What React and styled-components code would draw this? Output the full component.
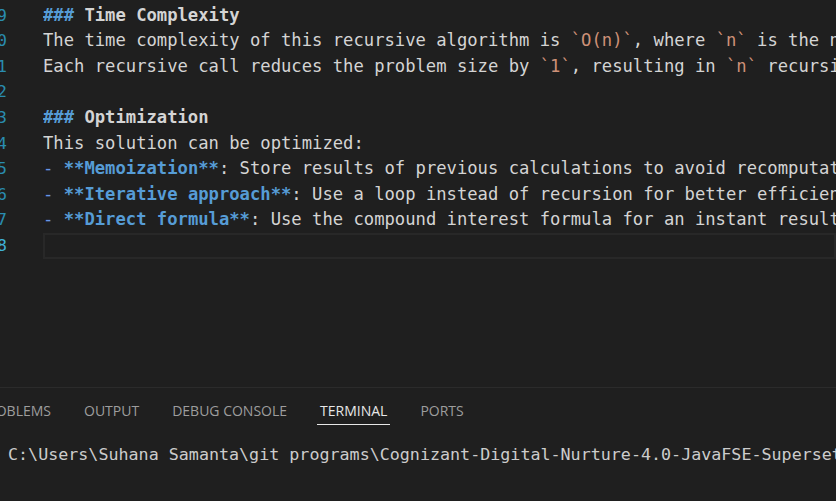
import React from 'react'
import styled, { createGlobalStyle } from 'styled-components'

const GlobalStyle = createGlobalStyle`
  html, body {
    margin: 0;
    padding: 0;
    background: #1f1f1f;
    overflow: hidden;
  }
`

const lines = [
  { n: 39, parts: [{ t: '### Time Complexity', k: 'heading' }] },
  {
    n: 40,
    parts: [
      { t: 'The time complexity of this recursive algorithm is ' },
      { t: '`O(n)`', k: 'code' },
      { t: ', where ' },
      { t: '`n`', k: 'code' },
      { t: ' is the number of years.' },
    ],
  },
  {
    n: 41,
    parts: [
      { t: 'Each recursive call reduces the problem size by ' },
      { t: '`1`', k: 'code' },
      { t: ', resulting in ' },
      { t: '`n`', k: 'code' },
      { t: ' recursive calls.' },
    ],
  },
  { n: 42, parts: [] },
  { n: 43, parts: [{ t: '### Optimization', k: 'heading' }] },
  { n: 44, parts: [{ t: 'This solution can be optimized:' }] },
  {
    n: 45,
    parts: [
      { t: '- ', k: 'dash' },
      { t: '**Memoization**', k: 'strong' },
      { t: ': Store results of previous calculations to avoid recomputation.' },
    ],
  },
  {
    n: 46,
    parts: [
      { t: '- ', k: 'dash' },
      { t: '**Iterative approach**', k: 'strong' },
      { t: ': Use a loop instead of recursion for better efficiency.' },
    ],
  },
  {
    n: 47,
    parts: [
      { t: '- ', k: 'dash' },
      { t: '**Direct formula**', k: 'strong' },
      { t: ': Use the compound interest formula for an instant result.' },
    ],
  },
  { n: 48, parts: [], active: true },
]

const tabs = ['OUTPUT', 'DEBUG CONSOLE', 'TERMINAL', 'PORTS']

const Heading = ({ text }) => {
  const [hash, ...rest] = text.split(' ')
  return (
    <>
      <Token $kind="hash">{hash}</Token>
      <Token $kind="headText">{' ' + rest.join(' ')}</Token>
    </>
  )
}

const App = () => {
  return (
    <>
      <GlobalStyle />
      <Window>
        <Editor>
          {lines.map((line) => (
            <Row key={line.n}>
              <LineNumber $active={line.active}>{line.n}</LineNumber>
              <Code $active={line.active}>
                {line.parts.map((p, i) =>
                  p.k === 'heading' ? (
                    <Heading key={i} text={p.t} />
                  ) : (
                    <Token key={i} $kind={p.k}>
                      {p.t}
                    </Token>
                  )
                )}
              </Code>
            </Row>
          ))}
        </Editor>

        <Panel>
          <TabBar>
            <ClippedTab>
              <TabLabel>PROBLEMS</TabLabel>
            </ClippedTab>
            {tabs.map((tab) => (
              <TabLabel key={tab} $active={tab === 'TERMINAL'}>
                {tab}
              </TabLabel>
            ))}
          </TabBar>
          <Terminal>
            C:\Users\Suhana Samanta\git programs\Cognizant-Digital-Nurture-4.0-JavaFSE-Superset
          </Terminal>
        </Panel>
      </Window>
    </>
  )
}

const Window = styled.div`
  width: 836px;
  height: 501px;
  display: flex;
  flex-direction: column;
  background: #1f1f1f;
  overflow: hidden;
`

const Editor = styled.div`
  height: 387px;
  padding-top: 2.6px;
  box-sizing: border-box;
  display: flex;
  flex-direction: column;
  font-family: 'DejaVu Sans Mono', 'Liberation Mono', monospace;
  font-size: 17.2px;
`

const Row = styled.div`
  display: flex;
  height: 25.6px;
  align-items: stretch;
`

const LineNumber = styled.div`
  width: 7px;
  flex-shrink: 0;
  overflow: hidden;
  direction: rtl;
  white-space: nowrap;
  line-height: 25.6px;
  color: ${(p) => (p.$active ? '#3fb2d8' : '#2a8db0')};
  font-size: 16.5px;
`

const Code = styled.div`
  margin-left: 36px;
  flex: 1;
  white-space: pre;
  overflow: hidden;
  line-height: 25.6px;
  color: #d4d4d4;
  box-shadow: ${(p) => (p.$active ? 'inset 0 0 0 2px #282828' : 'none')};
`

const tokenColors = {
  hash: '#569cd6',
  headText: '#d4d4d4',
  code: '#ce9178',
  dash: '#6796e6',
  strong: '#569cd6',
}

const Token = styled.span`
  color: ${(p) => tokenColors[p.$kind] || '#d4d4d4'};
  font-weight: ${(p) => (['hash', 'headText', 'strong'].includes(p.$kind) ? 700 : 400)};
`

const Panel = styled.div`
  flex: 1;
  border-top: 1px solid #2b2b2b;
  display: flex;
  flex-direction: column;
`

const TabBar = styled.div`
  height: 40px;
  display: flex;
  align-items: center;
  gap: 33px;
  font-family: 'Open Sans', 'Noto Sans', sans-serif;
  font-size: 14px;
`

const ClippedTab = styled.div`
  width: 51px;
  overflow: hidden;
  display: flex;
  justify-content: flex-end;
  flex-shrink: 0;
`

const TabLabel = styled.div`
  position: relative;
  white-space: nowrap;
  line-height: 20px;
  padding-top: 5px;
  color: ${(p) => (p.$active ? '#e7e7e7' : '#9d9d9d')};

  &::after {
    content: '';
    display: ${(p) => (p.$active ? 'block' : 'none')};
    position: absolute;
    left: -3px;
    right: -3px;
    bottom: -4px;
    height: 1px;
    background: #e7e7e7;
  }
`

const Terminal = styled.div`
  padding: 16px 0 0 8px;
  white-space: pre;
  overflow: hidden;
  font-family: 'DejaVu Sans Mono', 'Liberation Mono', monospace;
  font-size: 16.7px;
  line-height: 20px;
  color: #cccccc;
`

export default App
